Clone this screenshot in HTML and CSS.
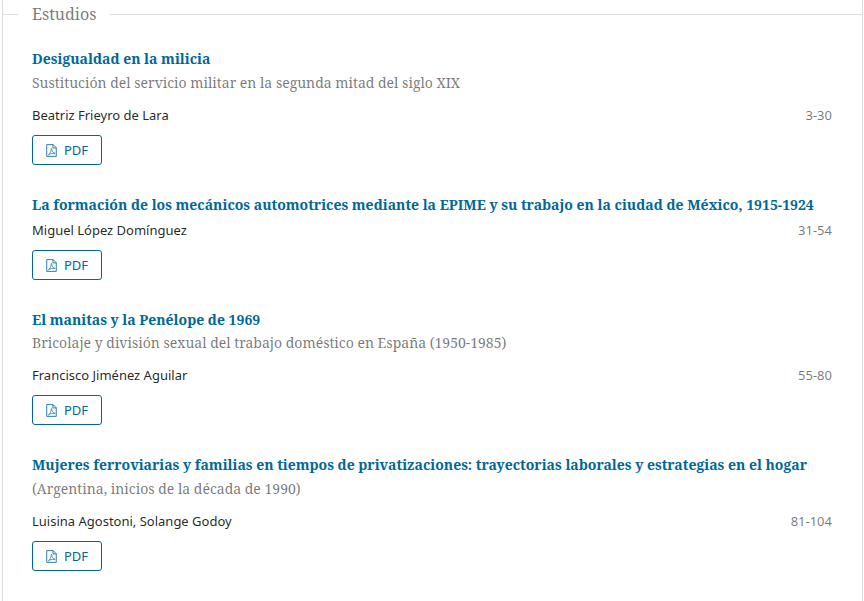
FILE: index.html
```html
<!DOCTYPE html>
<html lang="es">
<head>
<meta charset="utf-8">
<title>Estudios</title>
<link rel="stylesheet" href="styles.css">
</head>
<body>
<svg class="defs" aria-hidden="true"><symbol id="pdf-icon" viewBox="0 0 12 14"><path class="ic" d="M.8.6h7L11.200 4v9.400H.8z"/><path class="ic" d="M7.600.6v3.600h3.600"/><path class="ic ic-thin" d="M2.600 11.800c1.700-1 3-3.800 3.100-6.600 0-.9.800-.7.700.3-.2 2.100 1.100 3.900 3 4.100.9.100.7.900-.3.700-2.100-.4-4.300-.1-6.500 1.500z"/></symbol></svg>
<section class="section">
  <header class="section-head"><span class="dash"></span><h2>Estudios</h2><span class="rule"></span></header>
  <ul class="list">
    <li class="item">
      <h3 class="title"><a href="#">Desigualdad en la milicia</a></h3>
      <div class="subtitle">Sustitución del servicio militar en la segunda mitad del siglo XIX</div>
      <div class="meta meta-sub"><span>Beatriz Frieyro de Lara</span><span class="pages">3-30</span></div>
      <a class="pdf" href="#"><svg class="pdf-svg"><use href="#pdf-icon"/></svg>PDF</a>
    </li>
    <li class="item">
      <h3 class="title"><a href="#">La formación de los mecánicos automotrices mediante la EPIME y su trabajo en la ciudad de México, 1915-1924</a></h3>
      <div class="meta"><span>Miguel López Domínguez</span><span class="pages">31-54</span></div>
      <a class="pdf" href="#"><svg class="pdf-svg"><use href="#pdf-icon"/></svg>PDF</a>
    </li>
    <li class="item">
      <h3 class="title"><a href="#">El manitas y la Penélope de 1969</a></h3>
      <div class="subtitle subtitle-tight">Bricolaje y división sexual del trabajo doméstico en España (1950-1985)</div>
      <div class="meta meta-sub"><span>Francisco Jiménez Aguilar</span><span class="pages">55-80</span></div>
      <a class="pdf" href="#"><svg class="pdf-svg"><use href="#pdf-icon"/></svg>PDF</a>
    </li>
    <li class="item">
      <h3 class="title"><a href="#">Mujeres ferroviarias y familias en tiempos de privatizaciones: trayectorias laborales y estrategias en el hogar</a></h3>
      <div class="subtitle">(Argentina, inicios de la década de 1990)</div>
      <div class="meta meta-sub"><span>Luisina Agostoni, Solange Godoy</span><span class="pages">81-104</span></div>
      <a class="pdf" href="#"><svg class="pdf-svg"><use href="#pdf-icon"/></svg>PDF</a>
    </li>
  </ul>
</section>
</body>
</html>
```
FILE: styles.css
```css
* { box-sizing: border-box; }
html, body { margin: 0; height: 100%; background: #fff; overflow: hidden; }
body { padding: 0 1px 0 2px; font-family: "Noto Sans", sans-serif; }
.defs { display: none; }
.section { height: 601px; border-left: 1px solid #ddd; border-right: 1px solid #ddd; }
.section-head { display: flex; align-items: center; height: 28px; }
.dash { width: 15px; height: 1px; background: #ddd; }
.rule { flex: 1; height: 1px; background: #ddd; }
.section-head h2 { margin: 0; padding: 0 14px; font: 400 16px/28px "Noto Serif", "DejaVu Serif", serif; color: rgba(0,0,0,.54); }
.list { list-style: none; margin: 0; padding: 21px 30px 0 29px; }
.item { margin-bottom: 30px; }
.title { margin: 0; font: 700 14px/20px "Noto Serif", "DejaVu Serif", serif; }
.title a { color: #006798; text-decoration: none; }
.subtitle { margin-top: 4px; font: 400 14px/20px "Noto Serif", "DejaVu Serif", serif; color: rgba(0,0,0,.54); }
.subtitle-tight { margin-top: 3px; }
.meta { display: flex; justify-content: space-between; margin-top: 5px; font-size: 13px; line-height: 20px; color: rgba(0,0,0,.87); }
.meta-sub { margin-top: 12px; }
.pages { color: rgba(0,0,0,.54); }
.pdf { display: inline-flex; align-items: center; gap: 7px; height: 30px; margin-top: 10px; padding: 0 13px; border: 1px solid #006798; border-radius: 3px; font-size: 13px; color: #006798; text-decoration: none; }
.pdf-svg { width: 11px; height: 13px; }
.ic { fill: none; stroke: #006798; stroke-width: .9; }
.ic-thin { stroke-width: .7; }
```
